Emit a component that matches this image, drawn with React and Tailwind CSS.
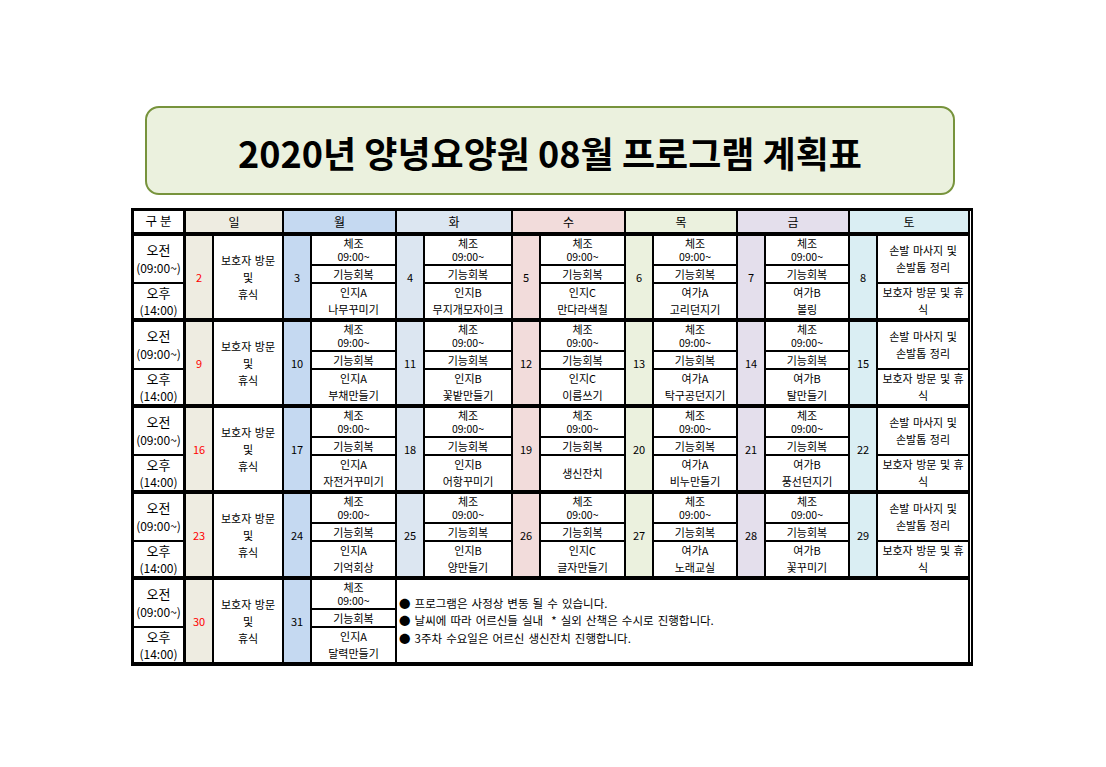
import React from "react";

const FONT = { fontFamily: '"Noto Sans CJK KR", "Noto Sans", sans-serif' };

const dayNames = ["일", "월", "화", "수", "목", "금", "토"];
const dayBg = [
  "bg-[#eeece1]",
  "bg-[#c5d9f1]",
  "bg-[#dce6f1]",
  "bg-[#f2dcdb]",
  "bg-[#ebf1de]",
  "bg-[#e4dfec]",
  "bg-[#daeef3]",
];
const numCol = [
  "col-start-1",
  "col-start-3",
  "col-start-5",
  "col-start-7",
  "col-start-9",
  "col-start-11",
  "col-start-13",
];
const txtCol = [
  "col-start-2",
  "col-start-4",
  "col-start-6",
  "col-start-8",
  "col-start-10",
  "col-start-12",
  "col-start-14",
];

const weeks = [
  {
    nums: [2, 3, 4, 5, 6, 7, 8],
    pm: [
      ["인지A", "나무꾸미기"],
      ["인지B", "무지개모자이크"],
      ["인지C", "만다라색칠"],
      ["여가A", "고리던지기"],
      ["여가B", "볼링"],
    ],
  },
  {
    nums: [9, 10, 11, 12, 13, 14, 15],
    pm: [
      ["인지A", "부채만들기"],
      ["인지B", "꽃밭만들기"],
      ["인지C", "이름쓰기"],
      ["여가A", "탁구공던지기"],
      ["여가B", "탈만들기"],
    ],
  },
  {
    nums: [16, 17, 18, 19, 20, 21, 22],
    pm: [
      ["인지A", "자전거꾸미기"],
      ["인지B", "어항꾸미기"],
      ["생신잔치"],
      ["여가A", "비누만들기"],
      ["여가B", "풍선던지기"],
    ],
  },
  {
    nums: [23, 24, 25, 26, 27, 28, 29],
    pm: [
      ["인지A", "기억회상"],
      ["인지B", "양만들기"],
      ["인지C", "글자만들기"],
      ["여가A", "노래교실"],
      ["여가B", "꽃꾸미기"],
    ],
  },
];

const GRID =
  "grid grid-cols-[26px_68px_26px_83px_26px_86px_26px_83px_26px_82px_26px_82px_26px_90px] gap-[2px]";

function LeftCol() {
  return (
    <div className="w-[49px] flex flex-col gap-[2px]">
      <div className="h-[46px] bg-white flex flex-col items-center justify-center overflow-hidden">
        <div className="text-[13px] leading-[18px]">오전</div>
        <div className="text-[12px] leading-[18px] whitespace-nowrap">(09:00~)</div>
      </div>
      <div className="h-[34px] bg-white flex flex-col items-center justify-center">
        <div className="text-[13px] leading-[17px]">오후</div>
        <div className="text-[12px] leading-[17px] whitespace-nowrap">(14:00)</div>
      </div>
    </div>
  );
}

function NumCell({ d, n }) {
  return (
    <div
      className={
        numCol[d] +
        " row-start-1 row-span-3 flex items-center justify-center text-[11px] " +
        dayBg[d] +
        (d === 0 ? " text-[#ff0000]" : "")
      }
    >
      {n}
    </div>
  );
}

function SundayText() {
  return (
    <div className="col-start-2 row-start-1 row-span-3 bg-white flex flex-col items-center justify-center text-[11px] leading-[17px] [word-spacing:1px]">
      <div className="whitespace-nowrap">보호자 방문</div>
      <div>및</div>
      <div>휴식</div>
    </div>
  );
}

function WeekdayCells({ d, pm }) {
  return (
    <>
      <div
        className={
          txtCol[d] +
          " row-start-1 bg-white flex flex-col items-center justify-center text-[11px] leading-[14px]"
        }
      >
        <div>체조</div>
        <div className="text-[10.5px]">09:00~</div>
      </div>
      <div
        className={
          txtCol[d] +
          " row-start-2 bg-white flex items-center justify-center text-[11px] leading-[16px]"
        }
      >
        기능회복
      </div>
      <div
        className={
          txtCol[d] +
          " row-start-3 bg-white flex flex-col items-center justify-center text-[11px] leading-[17px]"
        }
      >
        {pm.map((l, i) => (
          <div key={i} className="whitespace-nowrap">
            {l}
          </div>
        ))}
      </div>
    </>
  );
}

function SaturdayCells() {
  return (
    <>
      <div className="col-start-14 row-start-1 row-span-2 bg-white flex flex-col items-center justify-center text-[11px] leading-[17px] [word-spacing:1px]">
        <div className="whitespace-nowrap">손발 마사지 및</div>
        <div className="whitespace-nowrap">손발톱 정리</div>
      </div>
      <div className="col-start-14 row-start-3 bg-white flex flex-col items-center justify-center text-[11px] leading-[17px] [word-spacing:1px]">
        <div className="whitespace-nowrap">보호자 방문 및 휴</div>
        <div>식</div>
      </div>
    </>
  );
}

function Week({ w }) {
  return (
    <div className="flex gap-[3px]">
      <LeftCol />
      <div className={GRID + " grid-rows-[28px_16px_34px]"}>
        {w.nums.map((n, d) => (
          <NumCell key={d} d={d} n={n} />
        ))}
        <SundayText />
        {w.pm.map((pm, i) => (
          <WeekdayCells key={i} d={i + 1} pm={pm} />
        ))}
        <SaturdayCells />
      </div>
    </div>
  );
}

function LastWeek() {
  return (
    <div className="flex gap-[3px]">
      <LeftCol />
      <div className={GRID + " grid-rows-[28px_16px_34px]"}>
        <NumCell d={0} n={30} />
        <SundayText />
        <NumCell d={1} n={31} />
        <WeekdayCells d={1} pm={["인지A", "달력만들기"]} />
        <div className="col-start-5 col-span-10 row-start-1 row-span-3 bg-white flex flex-col justify-center pl-[2px] text-[11.5px] leading-[17.5px] [word-spacing:1.5px]">
          <div className="whitespace-pre">● 프로그램은 사정상 변동 될 수 있습니다.</div>
          <div className="whitespace-pre">● 날씨에 따라 어르신들 실내  * 실외 산책은 수시로 진행합니다.</div>
          <div className="whitespace-pre">● 3주차 수요일은 어르신 생신잔치 진행합니다.</div>
        </div>
      </div>
    </div>
  );
}

export default function App() {
  return (
    <div className="w-[1106px] h-[767px] bg-white text-black" style={FONT}>
      <div className="pt-[106px] pl-[145px]">
        <div className="w-[810px] h-[89px] rounded-[14px] border-2 border-[#77933c] bg-[#ebf1de] flex items-center justify-center">
          <div className="text-[36px] font-bold tracking-[0px] leading-none mt-[3px]">
            2020년 양녕요양원 08월 프로그램 계획표
          </div>
        </div>
      </div>
      <div className="mt-[13px] ml-[131px] w-fit border-l-[3px] border-t-[3px] border-b-[4px] border-r-[2px] border-black">
        <div className="bg-black pr-[2px] border-r border-white flex flex-col gap-[4px]">
          <div className="flex gap-[3px] h-[21px]">
            <div className="w-[49px] bg-white flex items-center justify-center text-[12.5px] whitespace-pre">
              구 분
            </div>
            <div className={GRID}>
              {dayNames.map((n, d) => (
                <div
                  key={d}
                  className={
                    numCol[d] +
                    " col-span-2 flex items-center justify-center text-[12px] " +
                    dayBg[d]
                  }
                >
                  {n}
                </div>
              ))}
            </div>
          </div>
          {weeks.map((w, i) => (
            <Week key={i} w={w} />
          ))}
          <LastWeek />
        </div>
      </div>
    </div>
  );
}
